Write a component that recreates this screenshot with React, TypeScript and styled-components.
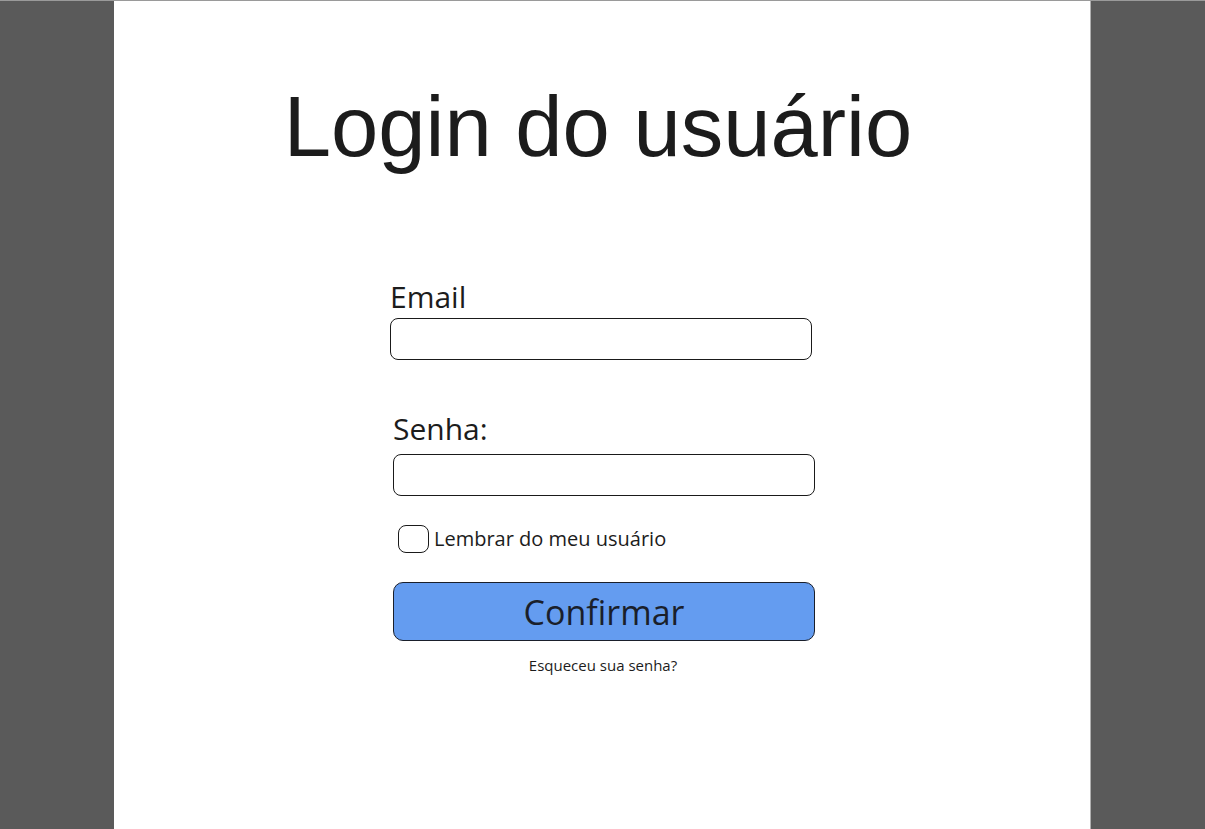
import React from "react";
import styled, { createGlobalStyle } from "styled-components";

const Global = createGlobalStyle`
  html, body { margin: 0; padding: 0; background: #5a5a5a; }
  body { border-top: 1px solid #9a9a9a; }
`;

const Page = styled.div`
  display: flex;
  min-height: 828px;
`;

const Panel = styled.main`
  margin-left: 114px;
  width: 976px;
  min-height: 828px;
  background: #ffffff;
  border-right: 1px solid #b0b0b0;
  display: flex;
  flex-direction: column;
  align-items: center;
`;

const Title = styled.h1`
  margin: 81px 0 0 -8px;
  font-family: "Liberation Sans", Arial, sans-serif;
  font-weight: 400;
  font-size: 85px;
  line-height: 90px;
  color: #1c1c1c;
`;

const Form = styled.form`
  margin-top: 108px;
  width: 426px;
  margin-left: 2px;
  display: flex;
  flex-direction: column;
  font-family: "Open Sans", "Noto Sans", sans-serif;
  color: #1c1c1c;
`;

const Field = styled.div<{ $offset: number; $gap: number; $labelGap: number }>`
  display: flex;
  flex-direction: column;
  margin-left: ${(p) => p.$offset}px;
  margin-top: ${(p) => p.$gap}px;
  gap: ${(p) => p.$labelGap}px;
`;

const Label = styled.label`
  font-size: 30px;
  line-height: 34px;
`;

const Input = styled.input`
  box-sizing: border-box;
  width: 422px;
  height: 42px;
  border: 1.6px solid #1a1a1a;
  border-radius: 8px;
  background: #fff;
  font-size: 18px;
  padding: 0 10px;
  outline: none;
`;

const RememberRow = styled.label`
  display: flex;
  align-items: center;
  gap: 5px;
  margin: 29px 0 0 8px;
  font-size: 20px;
  line-height: 28px;
`;

const Box = styled.span`
  box-sizing: border-box;
  width: 31px;
  height: 28px;
  border: 1.6px solid #1a1a1a;
  border-radius: 8px;
  background: #fff;
`;

const Button = styled.button`
  box-sizing: border-box;
  margin: 29px 0 0 3px;
  width: 422px;
  height: 59px;
  background: #649cf0;
  border: 1.6px solid #1a1f2b;
  border-radius: 10px;
  font-family: "Open Sans", "Noto Sans", sans-serif;
  font-size: 34px;
  color: #1a1f2b;
  padding: 0;
  cursor: pointer;
`;

const Forgot = styled.a`
  align-self: center;
  margin: 14px 0 0 0;
  font-size: 15px;
  line-height: 20px;
  color: #1c1c1c;
  text-decoration: none;
`;

export default function App() {
  return (
    <>
      <Global />
      <Page>
        <Panel>
          <Title>Login do usuário</Title>
          <Form onSubmit={(e) => e.preventDefault()}>
            <Field $offset={0} $gap={0} $labelGap={4}>
              <Label>Email</Label>
              <Input type="email" />
            </Field>
            <Field $offset={3} $gap={52} $labelGap={8}>
              <Label>Senha:</Label>
              <Input type="password" />
            </Field>
            <RememberRow>
              <Box />
              Lembrar do meu usuário
            </RememberRow>
            <Button type="submit">Confirmar</Button>
            <Forgot href="#">Esqueceu sua senha?</Forgot>
          </Form>
        </Panel>
      </Page>
    </>
  );
}
